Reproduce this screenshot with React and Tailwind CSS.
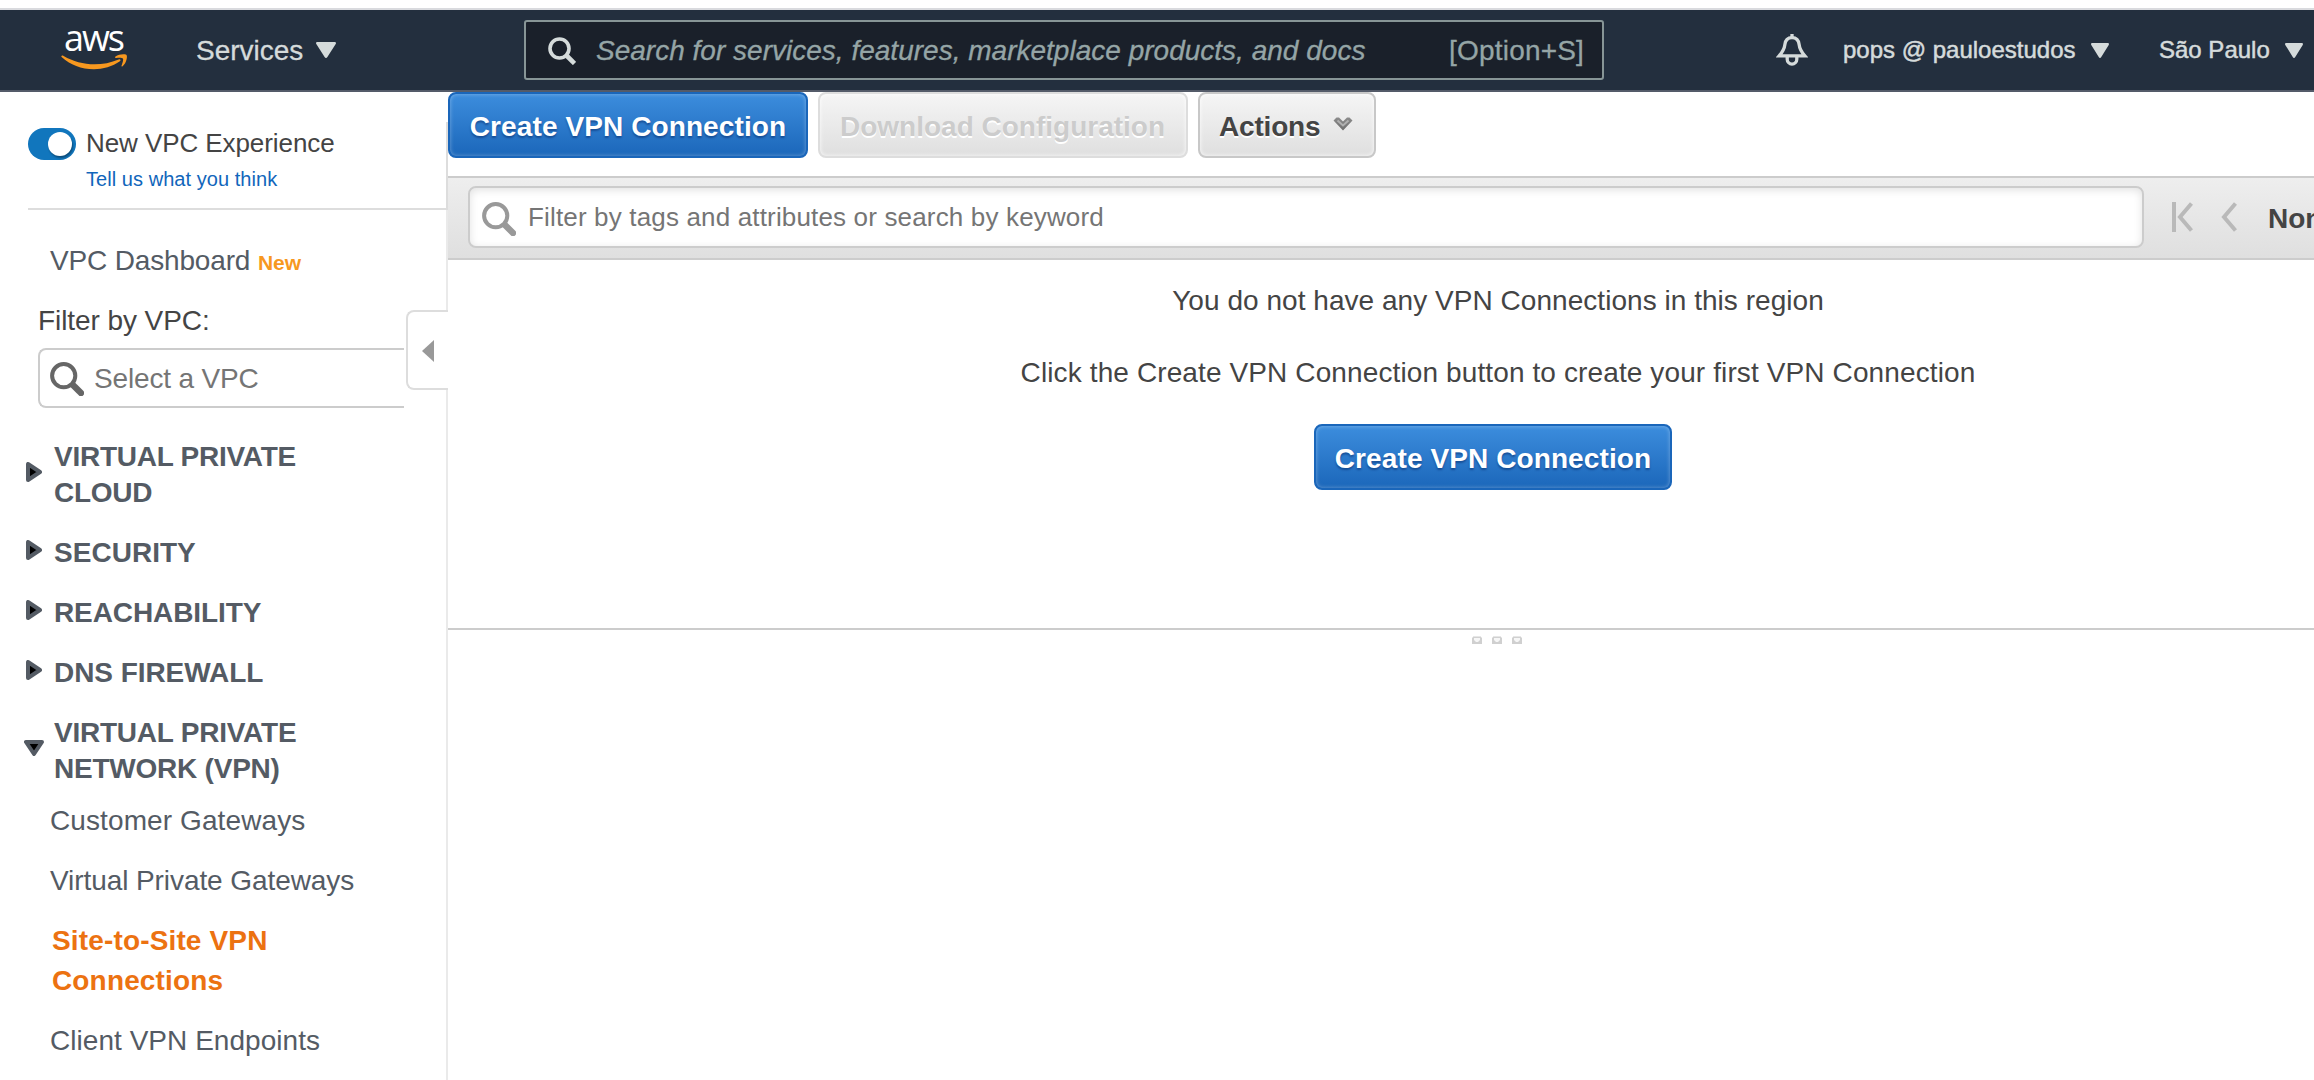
import React from "react";

function SearchIcon({ className }) {
  return (
    <svg viewBox="0 0 34 34" className={className} fill="none" stroke="currentColor">
      <circle cx="13.7" cy="13.7" r="11.6" strokeWidth="4" />
      <path d="M23.2 23.2 31 31" strokeWidth="6.4" strokeLinecap="round" />
    </svg>
  );
}

function Caret({ className }) {
  return (
    <svg viewBox="0 0 20 16" preserveAspectRatio="none" className={className} fill="currentColor">
      <path d="M1.4 0h17.2c1.2 0 1.7 1 1.1 2L11.4 15c-.7 1.2-2.1 1.2-2.8 0L.3 2C-.3 1 .2 0 1.4 0Z" />
    </svg>
  );
}

function AwsLogo() {
  return (
    <div className="flex h-[40px] w-[66px] shrink-0 flex-col items-center">
      <span className="-mt-[17px] block h-[51px] pr-[1px] font-['Open_Sans',sans-serif] text-[36px] leading-[51px] font-medium tracking-[-2px] text-white">
        aws
      </span>
      <svg viewBox="0 0 66 16" className="-mt-[9px] h-[16px] w-[66px] shrink-0" fill="#f7981f">
        <path d="M.3 2.2C.7 1.3 1.6 1.4 2.6 2 12 7.400 22.500 10.300 33.500 10.300c8.300 0 16.500-1.700 24.200-4.900 1.500-.6 2.700.8 1.200 1.900-7.300 5.300-17 8-26 8C20.400 15.300 9.100 10.700.6 3 .3 2.700.2 2.400.3 2.200Z" />
        <path d="M54.500 2.500C57.500.4 62.200-.2 64.800.6c1.400.4 1.300 2.600.8 4.700-.6 2.700-2 5.300-4 7-.7.6-1.500.2-1.100-.6.9-2.300 2.200-6.200 1.400-7.300-.8-1-4.300-.8-6.700-.5-1.200.1-1.700-.7-.7-1.400Z" />
      </svg>
    </div>
  );
}

function TopBar() {
  return (
    <header className="flex h-[84px] w-full items-start border-t-2 border-b-2 border-t-[#d9dade] border-b-[#545b69] bg-[#232f3e] pl-[61px] text-[#d5dbdb]">
      <div className="mt-[19px]">
        <AwsLogo />
      </div>
      <div className="mt-[25px] ml-[69px] flex w-[328px] shrink-0 [-webkit-text-stroke:0.300px_#d5dbdb]">
        <span className="w-[120px] text-[28px] leading-[31px]">Services</span>
        <Caret className="mt-[7px] h-[16px] w-[20px]" />
      </div>
      <div className="mt-[10px] flex h-[60px] w-[1080px] shrink-0 rounded-[3px] border-2 border-[#879596] bg-[#1a202a] text-[28px] leading-[31px] text-[#95a5a6] [-webkit-text-stroke:0.300px_#95a5a6]">
        <svg viewBox="0 0 28 28" className="mt-[15px] ml-[22px] h-[28px] w-[28px]" fill="none" stroke="#d5dbdb">
          <circle cx="11.500" cy="11.500" r="9.500" strokeWidth="3.600" />
          <path d="m18.500 18.500 8 8" strokeWidth="4.600" />
        </svg>
        <span className="mt-[13px] ml-[20px] w-[853px] italic tracking-[0.010px]">
          Search for services, features, marketplace products, and docs
        </span>
        <span className="mt-[13px] tracking-[0.200px] whitespace-nowrap">[Option+S]</span>
      </div>
      <svg viewBox="0 0 32 32" className="mt-[24px] ml-[172px] h-[32px] w-[32px] shrink-0" fill="none" stroke="#d5dbdb" strokeWidth="3.300">
        <path d="M16 3.600c-4.700 0-6.800 3.200-7.200 7.200C8.400 15.400 6.400 18 3.200 21.800h25.600C25.600 18 23.600 15.400 23.200 10.800 22.800 6.800 20.700 3.600 16 3.600Z" strokeLinejoin="miter" />
        <path d="M16 0v4" />
        <path d="M11.200 22.500v2.800a4.800 4.800 0 0 0 9.600 0v-2.800" />
      </svg>
      <div className="mt-[26px] ml-[35px] flex shrink-0 text-[24px] leading-[27px] font-normal [-webkit-text-stroke:0.500px_#d5dbdb]">
        <span className="w-[248px]">pops @ pauloestudos</span>
        <Caret className="mt-[7px] h-[15px] w-[18px]" />
        <span className="ml-[50px] w-[126px]">São Paulo</span>
        <Caret className="mt-[7px] h-[15px] w-[18px]" />
      </div>
    </header>
  );
}

const sections = [
  { label: "VIRTUAL PRIVATE CLOUD", iconClass: "mt-[23px]", textClass: "tracking-[-0.250px]" },
  { label: "SECURITY", iconClass: "mt-[5px]", textClass: "tracking-[0.030px]" },
  { label: "REACHABILITY", iconClass: "mt-[5px]", textClass: "tracking-[-0.100px]" },
  { label: "DNS FIREWALL", iconClass: "mt-[5px]", textClass: "tracking-[-0.060px]" },
  { label: "VIRTUAL PRIVATE NETWORK (VPN)", open: true, iconClass: "mt-[25px]", textClass: "tracking-[-0.230px]" },
];

const links = [
  { label: "Customer Gateways", textClass: "tracking-[0.100px]" },
  { label: "Virtual Private Gateways", textClass: "tracking-[-0.080px]" },
  { label: "Site-to-Site VPN Connections", active: true },
  { label: "Client VPN Endpoints", textClass: "tracking-[0.040px]" },
];

function Disclosure({ open, className }) {
  return (
    <div className={`w-[20px] shrink-0 ${className}`}>
      {open ? (
        <svg viewBox="0 0 20 16" className="h-[16px] w-[20px]">
          <path d="M2 2h16l-8 12Z" fill="#000" stroke="#545b64" strokeWidth="4" strokeLinejoin="round" />
        </svg>
      ) : (
        <svg viewBox="0 0 16 20" className="ml-[2px] h-[20px] w-[16px]">
          <path d="M2 2v16l12-8Z" fill="#000" stroke="#545b64" strokeWidth="4" strokeLinejoin="round" />
        </svg>
      )}
    </div>
  );
}

function Sidebar() {
  return (
    <aside className="relative flex w-[448px] shrink-0 flex-col text-[28px] text-[#545b64]">
      <div className="mt-[30px] ml-[28px] h-[88px] border-r-2 border-b-2 border-[#ddd] pt-[6px]">
        <div className="flex h-[32px] items-start">
          <div className="flex h-[32px] w-[48px] items-start justify-end rounded-full bg-[#1176bd] pt-[4px] pr-[4px]">
            <div className="h-[24px] w-[24px] rounded-full bg-white shadow-[1px_2px_2px_rgba(0,0,0,0.350)]" />
          </div>
          <span className="ml-[10px] text-[26px] leading-[30px] tracking-[-0.080px] text-[#444]">New VPC Experience</span>
        </div>
        <div className="mt-[8px] ml-[58px] text-[20px] leading-[22px] tracking-[0.050px] text-[#1166bb]">Tell us what you think</div>
      </div>
      <div className="flex grow flex-col border-r-2 border-[#eaeaea]">
        <div className="mt-[35px] ml-[50px] flex h-[31px] items-baseline leading-[31px]">
          <span className="w-[208px] tracking-[-0.160px]">VPC Dashboard</span>
          <span className="text-[21px] font-bold tracking-[-0.100px] text-[#f7981f]">New</span>
        </div>
        <div className="mt-[29px] ml-[38px] leading-[31px] tracking-[-0.080px] text-[#444]">Filter by VPC:</div>
        <div className="mt-[12px] ml-[38px] flex h-[60px] w-[366px] rounded-l-[8px] border-2 border-r-0 border-[#ccc] text-[#757575]">
          <SearchIcon className="mt-[12px] ml-[10px] h-[34px] w-[34px] text-[#666]" />
          <span className="mt-[13px] ml-[10px] leading-[31px] tracking-[-0.160px]">Select a VPC</span>
        </div>
        <nav className="mt-[31px] flex flex-col">
          <div className="flex flex-col gap-[24px]">
            {sections.map((s) => (
              <div key={s.label} className="flex items-start pl-[24px]">
                <Disclosure open={s.open} className={s.iconClass} />
                <span className={`ml-[10px] w-[260px] leading-[36px] font-bold ${s.textClass}`}>{s.label}</span>
              </div>
            ))}
          </div>
          <div className="mt-[14px] ml-[50px] flex flex-col gap-[20px] leading-[40px]">
            {links.map((l) =>
              l.active ? (
                <a key={l.label} className="w-[260px] pl-[2px] font-bold tracking-[0.150px] text-[#ec7211]">
                  {l.label}
                </a>
              ) : (
                <a key={l.label} className={`whitespace-nowrap ${l.textClass}`}>
                  {l.label}
                </a>
              )
            )}
          </div>
        </nav>
      </div>
      <div className="absolute top-[218px] right-0 flex h-[80px] w-[42px] items-center rounded-l-[8px] border-2 border-r-0 border-[#ddd] bg-white pl-[14px]">
        <svg viewBox="0 0 12 22" className="mt-[2px] h-[22px] w-[12px]" fill="#999">
          <path d="M12 0v22L0 11Z" />
        </svg>
      </div>
    </aside>
  );
}

function PrimaryButton({ className }) {
  return (
    <button
      className={`flex h-[66px] justify-center rounded-[8px] border-2 border-[#1a66ba] bg-linear-to-b from-[#3c8ddd] to-[#1b67ba] pt-[17px] text-[28px] leading-[31px] font-bold tracking-[0.100px] text-white shadow-[inset_0_0_4px_rgba(255,255,255,0.350)] [text-shadow:0_2px_2px_rgba(0,30,90,0.450)] ${className}`}
    >
      Create VPN Connection
    </button>
  );
}

function Main() {
  return (
    <main className="flex w-[2100px] shrink-0 flex-col text-[28px] leading-[31px] text-[#444]">
      <div className="flex h-[84px] items-start">
        <PrimaryButton className="w-[360px]" />
        <button className="ml-[10px] flex h-[66px] w-[370px] justify-center rounded-[8px] border-2 border-[#ddd] bg-linear-to-b from-[#f5f5f5] to-[#dfdfdf] pt-[17px] pr-[1px] font-bold text-[#ccc] shadow-[inset_0_0_4px_rgba(255,255,255,0.900)] [text-shadow:0_2px_0_#fff]">
          Download Configuration
        </button>
        <button className="ml-[10px] flex h-[66px] w-[178px] items-start rounded-[8px] border-2 border-[#c8c8c8] bg-linear-to-b from-[#f5f5f5] to-[#dfdfdf] pt-[17px] pl-[19px] font-bold tracking-[-0.180px] shadow-[inset_0_0_4px_rgba(255,255,255,0.900)] [text-shadow:0_2px_0_#fff]">
          Actions
          <svg viewBox="0 0 20 14" className="mt-[6px] ml-[13px] h-[14px] w-[20px]">
            <defs>
              <linearGradient id="chevron" x2="0" y2="1">
                <stop offset="0" stopColor="#8c8c8c" />
                <stop offset="1" stopColor="#6e6e6e" />
              </linearGradient>
            </defs>
            <path d="M0.500 3.500 3.500.5h2.500L10 4.500 14 .5h2.500l3 3L10 13.500Z" fill="url(#chevron)" />
            <path d="M4.500 3.500 10 8.500l5.500-5" fill="none" stroke="#b0b0b0" strokeWidth="2" />
          </svg>
        </button>
      </div>
      <div className="flex h-[84px] border-y-2 border-[#ccc] bg-linear-to-b from-[#eee] to-[#dfdfdf]">
        <div className="mt-[8px] ml-[20px] flex h-[62px] w-[1676px] shrink-0 rounded-[8px] border-2 border-[#ccc] bg-white shadow-[inset_0_2px_8px_rgba(0,0,0,0.120)]">
          <SearchIcon className="mt-[14px] ml-[12px] h-[34px] w-[34px] text-[#999]" />
          <span className="mt-[14px] ml-[12px] text-[26px] leading-[30px] tracking-[0.160px] text-[#757575]">
            Filter by tags and attributes or search by keyword
          </span>
        </div>
        <svg viewBox="0 0 22 30" className="mt-[24px] ml-[27px] h-[30px] w-[22px] shrink-0" fill="none" stroke="#b9b9b9" strokeWidth="4">
          <path d="M3 0v30" />
          <path d="M20.500 1.500 9 15l11.500 13.500" />
        </svg>
        <svg viewBox="0 0 16 30" className="mt-[24px] ml-[28px] h-[30px] w-[16px] shrink-0" fill="none" stroke="#b9b9b9" strokeWidth="4">
          <path d="M14.500 1.500 3 15l11.500 13.500" />
        </svg>
        <span className="mt-[25px] ml-[31px] font-bold">None</span>
      </div>
      <div className="mt-[25px] text-center tracking-[0.040px]">You do not have any VPN Connections in this region</div>
      <div className="mt-[41px] text-center tracking-[0.115px]">
        Click the Create VPN Connection button to create your first VPN Connection
      </div>
      <PrimaryButton className="mt-[36px] ml-[866px] w-[358px]" />
      <div className="mt-[138px] flex items-start gap-[10px] border-t-2 border-[#ccc] pt-[6px] pl-[1024px]">
        {[0, 1, 2].map((i) => (
          <svg key={i} viewBox="0 0 10 8" className="h-[8px] w-[10px]">
            <path d="M2 0h6l2 2v6H0V2Z" fill="#d0d0d0" />
            <path d="M2 0h6v1H2Z" fill="#e6e6e6" />
            <path d="M2 2h6v2L6 6H4L2 4Z" fill="#f6f6f6" />
          </svg>
        ))}
      </div>
    </main>
  );
}

export default function App() {
  return (
    <div className="flex h-[1080px] w-[2314px] flex-col overflow-hidden bg-white pt-[8px] font-['Liberation_Sans',Arial,sans-serif]">
      <TopBar />
      <div className="flex grow overflow-hidden">
        <Sidebar />
        <Main />
      </div>
    </div>
  );
}
